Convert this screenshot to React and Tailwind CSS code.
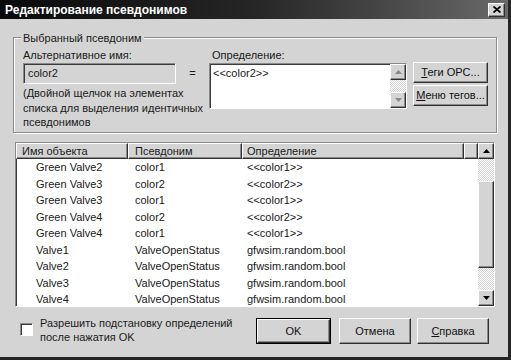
import React from 'react';

// Win9x style 3D edges
const raised =
  'border border-t-white border-l-white border-r-[#303030] border-b-[#303030] shadow-[inset_-1px_-1px_0_#8a8a8a] bg-[#d4d4d4]';
const sunken =
  'border border-t-[#8a8a8a] border-l-[#8a8a8a] border-r-white border-b-white shadow-[inset_1px_1px_0_#3a3a3a]';
const checker =
  'bg-[repeating-conic-gradient(#ffffff_0%_25%,#d4d4d4_0%_50%)] bg-size-[2px_2px]';

const rows = [
  ['Green Valve2', 'color1', '<<color1>>'],
  ['Green Valve3', 'color2', '<<color2>>'],
  ['Green Valve3', 'color1', '<<color1>>'],
  ['Green Valve4', 'color2', '<<color2>>'],
  ['Green Valve4', 'color1', '<<color1>>'],
  ['Valve1', 'ValveOpenStatus', 'gfwsim.random.bool'],
  ['Valve2', 'ValveOpenStatus', 'gfwsim.random.bool'],
  ['Valve3', 'ValveOpenStatus', 'gfwsim.random.bool'],
  ['Valve4', 'ValveOpenStatus', 'gfwsim.random.bool'],
];

const Arrow = ({ up, disabled }) => (
  <svg width="7" height="4" viewBox="0 0 7 4">
    <polygon
      points={up ? '3.5,0 7,4 0,4' : '0,0 7,0 3.5,4'}
      fill={disabled ? '#8a8a8a' : '#000'}
    />
  </svg>
);

const ScrollBtn = ({ up, disabled }) => (
  <div className={`${raised} w-[16px] h-[16px] flex items-center justify-center shrink-0`}>
    <Arrow up={up} disabled={disabled} />
  </div>
);

const Button = ({ children, className = '' }) => (
  <div className={`${raised} flex items-center justify-center text-[#111] ${className}`}>
    {children}
  </div>
);

export default function App() {
  return (
    <div
      className="w-[511px] h-[360px] bg-[#d4d4d4] border-r-[3px] border-b-[3px] border-[#262626] flex flex-col overflow-hidden text-[11px] text-[#1a1a1a]"
      style={{ fontFamily: '"Liberation Sans", Arial, sans-serif' }}
    >
      {/* Title bar */}
      <div className="h-[19px] shrink-0 flex items-center justify-between pl-[5px] pr-[3px] bg-gradient-to-r from-[#0a0a0a] via-[#262626] to-[#6a6a6a]">
        <span className="text-white font-bold text-[12px] leading-none">Редактирование псевдонимов</span>
        <div className={`${raised} w-[17px] h-[14px] flex items-center justify-center`}>
          <svg width="8" height="7" viewBox="0 0 8 7">
            <path d="M0.5 0.5 L7.5 6.5 M7.5 0.5 L0.5 6.5" stroke="#000" strokeWidth="1.8" />
          </svg>
        </div>
      </div>

      {/* Group box */}
      <div className="relative mt-[18px] ml-[13px] w-[484px] h-[96px] shrink-0 border border-[#8a8a8a] shadow-[1px_1px_0_#fff,inset_1px_1px_0_#fff]">
        <span className="absolute -top-[7px] left-[7px] px-[2px] bg-[#d4d4d4] leading-[14px]">
          Выбранный псевдоним
        </span>
        <div className="flex pl-[9px] pt-[10px]">
          {/* Left column */}
          <div className="w-[186px] shrink-0">
            <div className="leading-[14px]">Альтернативное имя:</div>
            <div className="flex items-center mt-[1px]">
              <div className={`${sunken} w-[153px] h-[21px] flex items-center pl-[4px] bg-[#d4d4d4]`}>
                color2
              </div>
              <span className="flex-1 text-center">=</span>
            </div>
            <div className="mt-[2px] leading-[14.5px] whitespace-nowrap">
              (Двойной щелчок на элементах
              <br />
              списка для выделения идентичных
              <br />
              псевдонимов
            </div>
          </div>

          {/* Definition */}
          <div className="w-[198px] shrink-0">
            <div className="leading-[14px] pl-[3px]">Определение:</div>
            <div className={`${sunken} mt-[1px] h-[46px] bg-white flex`}>
              <div className="flex-1 pl-[3px] pt-[3px] leading-[13px]">&lt;&lt;color2&gt;&gt;</div>
              <div className="w-[16px] flex flex-col">
                <ScrollBtn up disabled />
                <div className={`flex-1 ${checker}`} />
                <ScrollBtn disabled />
              </div>
            </div>
          </div>

          {/* Buttons */}
          <div className="ml-[6px] w-[75px] mt-[14px] flex flex-col gap-[2px]">
            <Button className="h-[21px]">
              <span>
                <span className="underline">Т</span>еги OPC...
              </span>
            </Button>
            <Button className="h-[21px]">
              <span>
                <span className="underline">М</span>еню тегов...
              </span>
            </Button>
          </div>
        </div>
      </div>

      {/* List view */}
      <div className={`${sunken} mt-[9px] ml-[15px] w-[480px] h-[165px] shrink-0 bg-white flex`}>
        <div className="flex-1 flex flex-col overflow-hidden">
          <div className="h-[16px] shrink-0 flex">
            <div className={`${raised} w-[112px] pl-[5px] flex items-center`}>Имя объекта</div>
            <div className={`${raised} w-[114px] pl-[6px] flex items-center`}>Псевдоним</div>
            <div className={`${raised} w-[222px] pl-[4px] flex items-center`}>Определение</div>
            <div className={`${raised} flex-1`} />
          </div>
          <div className="flex-1 overflow-hidden">
            {rows.map((r, i) => (
              <div key={i} className="h-[16.5px] flex items-center text-[#202020]">
                <div className="w-[112px] pl-[20px] whitespace-nowrap">{r[0]}</div>
                <div className="w-[114px] pl-[7px] whitespace-nowrap">{r[1]}</div>
                <div className="pl-[5px] whitespace-nowrap">{r[2]}</div>
              </div>
            ))}
          </div>
        </div>
        <div className="w-[16px] flex flex-col">
          <ScrollBtn up />
          <div className={`h-[22px] ${checker}`} />
          <div className={`${raised} h-[87px]`} />
          <div className={`flex-1 ${checker}`} />
          <ScrollBtn />
        </div>
      </div>

      {/* Bottom */}
      <div className="mt-[11px] flex items-start pl-[20px]">
        <div className={`${sunken} mt-[5px] w-[13px] h-[13px] bg-white shrink-0`} />
        <div className="ml-[7px] w-[216px] -mt-[2px] leading-[14px] whitespace-nowrap">
          Разрешить подстановку определений
          <br />
          после нажатия OK
        </div>
        <div className="w-[75px] h-[26px] border border-black">
          <Button className="w-full h-full">OK</Button>
        </div>
        <Button className="ml-[8px] w-[72px] h-[26px]">Отмена</Button>
        <Button className="ml-[6px] w-[72px] h-[26px]">
          <span>
            <span className="underline">С</span>правка
          </span>
        </Button>
      </div>
    </div>
  );
}
